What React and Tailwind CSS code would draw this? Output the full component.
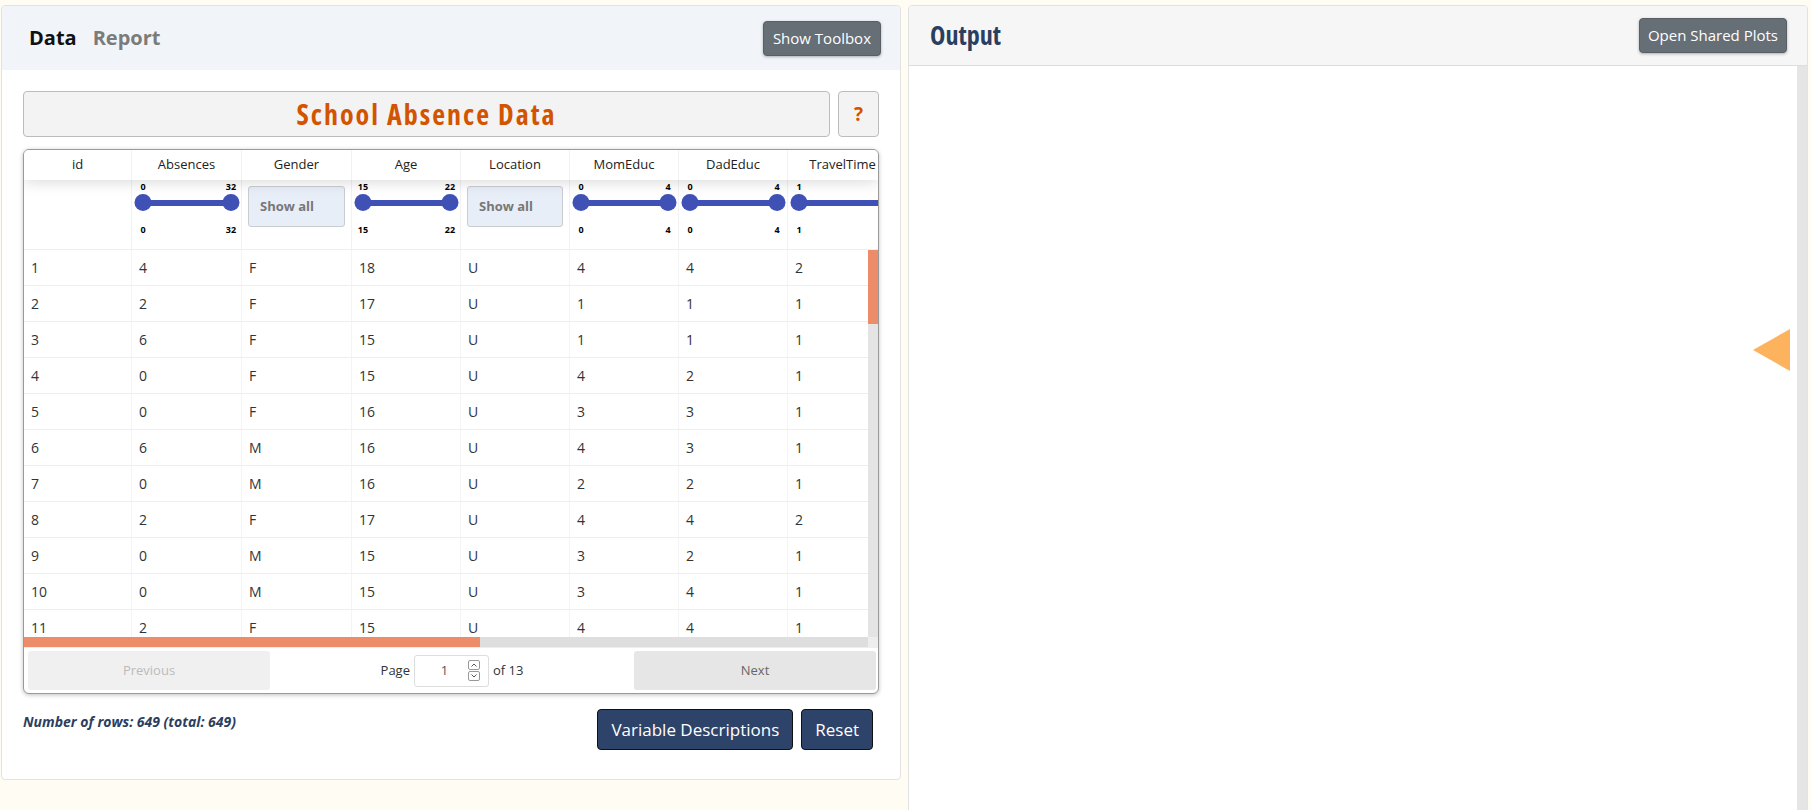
import React from 'react'

const cols = [
  { k: 'id', w: 'w-[108px]', f: null },
  { k: 'Absences', w: 'w-[110px]', f: ['s', 0, 32] },
  { k: 'Gender', w: 'w-[110px]', f: ['sel'] },
  { k: 'Age', w: 'w-[109px]', f: ['s', 15, 22] },
  { k: 'Location', w: 'w-[109px]', f: ['sel'] },
  { k: 'MomEduc', w: 'w-[109px]', f: ['s', 0, 4] },
  { k: 'DadEduc', w: 'w-[109px]', f: ['s', 0, 4] },
  { k: 'TravelTime', w: 'w-[110px]', f: ['s', 1, 4] },
]

const rows = [
  [1, 4, 'F', 18, 'U', 4, 4, 2],
  [2, 2, 'F', 17, 'U', 1, 1, 1],
  [3, 6, 'F', 15, 'U', 1, 1, 1],
  [4, 0, 'F', 15, 'U', 4, 2, 1],
  [5, 0, 'F', 16, 'U', 3, 3, 1],
  [6, 6, 'M', 16, 'U', 4, 3, 1],
  [7, 0, 'M', 16, 'U', 2, 2, 1],
  [8, 2, 'F', 17, 'U', 4, 4, 2],
  [9, 0, 'M', 15, 'U', 3, 2, 1],
  [10, 0, 'M', 15, 'U', 3, 4, 1],
  [11, 2, 'F', 15, 'U', 4, 4, 1],
]

function Slider({ min, max }){
  return (
    <div className="relative h-full ml-[11px] mr-[10px]">
      <span className="absolute left-0 top-[2px] -translate-x-1/2 text-[9px] leading-[10px] font-bold text-black">{min}</span>
      <span className="absolute right-0 top-[2px] translate-x-1/2 text-[9px] leading-[10px] font-bold text-black">{max}</span>
      <div className="absolute inset-x-0 top-[20px] h-[6px] bg-[#3f51b5]" />
      <div className="absolute left-0 top-[14px] w-[17px] h-[17px] -translate-x-1/2 rounded-full bg-[#3f51b5]" />
      <div className="absolute right-0 top-[14px] w-[17px] h-[17px] translate-x-1/2 rounded-full bg-[#3f51b5]" />
      <span className="absolute left-0 top-[45px] -translate-x-1/2 text-[9px] leading-[10px] font-bold text-black">{min}</span>
      <span className="absolute right-0 top-[45px] translate-x-1/2 text-[9px] leading-[10px] font-bold text-black">{max}</span>
    </div>
  )
}

function Filter({ f }){
  if (!f) return null
  if (f[0] === 'sel') return (
    <div className="mt-[6px] mx-[6px] h-[41px] bg-[#e8eef8] border border-[#c9ccd1] rounded-[3px] flex items-center pl-[11px] text-[13px] font-bold text-[#777]">Show all</div>
  )
  return <Slider min={f[1]} max={f[2]} />
}

function DataTable(){
  return (
    <div className="mt-[12px] h-[545px] border border-[#9a9a9a] rounded-[6px] shadow-[0_1px_4px_rgba(0,0,0,0.25)] overflow-hidden flex flex-col bg-white">
      <div className="flex h-[30px] shrink-0 relative z-10 bg-white shadow-[0_2px_15px_rgba(0,0,0,0.15)]">
        {cols.map(c => (
          <div key={c.k} className={`${c.w} shrink-0 flex items-center justify-center text-[13px] text-[#222] border-r border-[#f2f2f2]`}>{c.k}</div>
        ))}
      </div>
      <div className="flex h-[70px] shrink-0 border-b border-[#eee]">
        {cols.map(c => (
          <div key={c.k} className={`${c.w} shrink-0 border-r border-[#f2f2f2]`}><Filter f={c.f} /></div>
        ))}
      </div>
      <div className="flex h-[387px] shrink-0">
        <div className="flex-1 overflow-hidden">
          {rows.map(r => (
            <div key={r[0]} className="flex h-[36px] border-b border-[#eee]">
              {r.map((v, i) => (
                <div key={i} className={`${cols[i].w} shrink-0 flex items-center pl-[7px] text-[14px] text-[#333] border-r border-[#f4f4f4]`}>{v}</div>
              ))}
            </div>
          ))}
        </div>
        <div className="w-[10px] bg-[#e4e4e4]">
          <div className="h-[74px] bg-[#ec8c69]" />
        </div>
      </div>
      <div className="flex h-[10px] shrink-0">
        <div className="flex-1 bg-[#dedede]">
          <div className="w-[456px] h-full bg-[#ec8c69]" />
        </div>
        <div className="w-[10px] bg-[#eeeeee]" />
      </div>
      <div className="flex items-center h-[48px] pl-[4px] pr-[2px] border-t border-[#eee]">
        <div className="w-[242px] h-[39px] rounded-[3px] bg-[#f0f0f0] flex items-center justify-center text-[13px] text-[#bbb]">Previous</div>
        <div className="flex-1 flex items-center justify-center gap-[4px] text-[13px] text-[#333]">
          <span>Page</span>
          <div className="w-[75px] h-[32px] border border-[#ddd] rounded-[3px] flex items-center bg-white">
            <span className="flex-1 text-center pl-[6px] text-[#555]">1</span>
            <div className="flex flex-col gap-[1px] mr-[8px]">
              <div className="w-[12px] h-[10px] border border-[#999] rounded-[2px] flex items-center justify-center">
                <svg width="6" height="4" viewBox="0 0 6 4"><path d="M0.5 3.5 L3 1 L5.5 3.5" fill="none" stroke="#555" strokeWidth="1" /></svg>
              </div>
              <div className="w-[12px] h-[10px] border border-[#999] rounded-[2px] flex items-center justify-center">
                <svg width="6" height="4" viewBox="0 0 6 4"><path d="M0.5 0.5 L3 3 L5.5 0.5" fill="none" stroke="#555" strokeWidth="1" /></svg>
              </div>
            </div>
          </div>
          <span>of 13</span>
        </div>
        <div className="w-[242px] h-[39px] rounded-[3px] bg-[#e6e6e6] flex items-center justify-center text-[13px] text-[#666]">Next</div>
      </div>
    </div>
  )
}

export default function App(){
  return (
    <div className="h-[810px] overflow-hidden bg-[#fffdf3] flex gap-[7px] pt-[5px] pl-[1px] font-['Open_Sans',sans-serif]">
      <div className="w-[900px] h-[775px] shrink-0 bg-white border border-[#e2e2e2] rounded-[4px] flex flex-col">
        <div className="h-[64px] bg-[#f1f5fa] rounded-t-[4px] flex items-center justify-between pl-[27px] pr-[19px]">
          <div className="flex items-center gap-[16px] text-[20px]">
            <span className="font-bold text-[#111]">Data</span>
            <span className="font-bold text-[#7b7b7b]">Report</span>
          </div>
          <button className="h-[35px] px-[9px] bg-[#666e76] border border-[#585f66] rounded-[4px] text-white text-[15px] shadow-[0_1px_3px_rgba(0,0,0,0.3)]">Show Toolbox</button>
        </div>
        <div className="px-[21px] pt-[21px]">
          <div className="flex gap-[8px] h-[46px]">
            <div className="flex-1 bg-[#f3f3f3] border border-[#bcbcbc] rounded-[4px] flex items-center justify-center text-[28px] font-bold text-[#d35400] tracking-[2px] [font-stretch:75%]">School Absence Data</div>
            <div className="w-[41px] bg-[#f3f3f3] border border-[#bcbcbc] rounded-[4px] flex items-center justify-center text-[19px] font-bold text-[#d35400]">?</div>
          </div>
          <DataTable />
          <div className="flex justify-between items-start pt-[15px]">
            <div className="mt-[3px] text-[14px] leading-[20px] font-bold italic text-[#2c3e60]">Number of rows: 649 (total: 649)</div>
            <div className="flex gap-[8px] mr-[6px]">
              <button className="h-[41px] px-[13px] bg-[#2e4369] border border-[#111] rounded-[4px] text-white text-[17px]">Variable Descriptions</button>
              <button className="h-[41px] px-[13px] bg-[#2e4369] border border-[#111] rounded-[4px] text-white text-[17px]">Reset</button>
            </div>
          </div>
        </div>
      </div>
      <div className="w-[900px] h-[820px] shrink-0 bg-white border border-[#e2e2e2] rounded-t-[4px] flex flex-col">
        <div className="h-[60px] shrink-0 bg-[#f6f6f6] border-b border-[#ddd] rounded-t-[4px] flex items-center justify-between pl-[21px] pr-[20px]">
          <span className="text-[26px] font-bold text-[#2c3e60] [font-stretch:75%]">Output</span>
          <button className="h-[35px] px-[8px] bg-[#666e76] border border-[#585f66] rounded-[4px] text-white text-[15px] shadow-[0_1px_3px_rgba(0,0,0,0.3)]">Open Shared Plots</button>
        </div>
        <div className="relative flex-1 flex justify-end">
          <div className="w-[10px] bg-[#e5e5e5]" />
          <svg className="absolute left-[844px] top-[263px]" width="37" height="42" viewBox="0 0 37 42">
            <polygon points="37,0 37,42 0,21" fill="#fdb35e" />
          </svg>
        </div>
      </div>
    </div>
  )
}
